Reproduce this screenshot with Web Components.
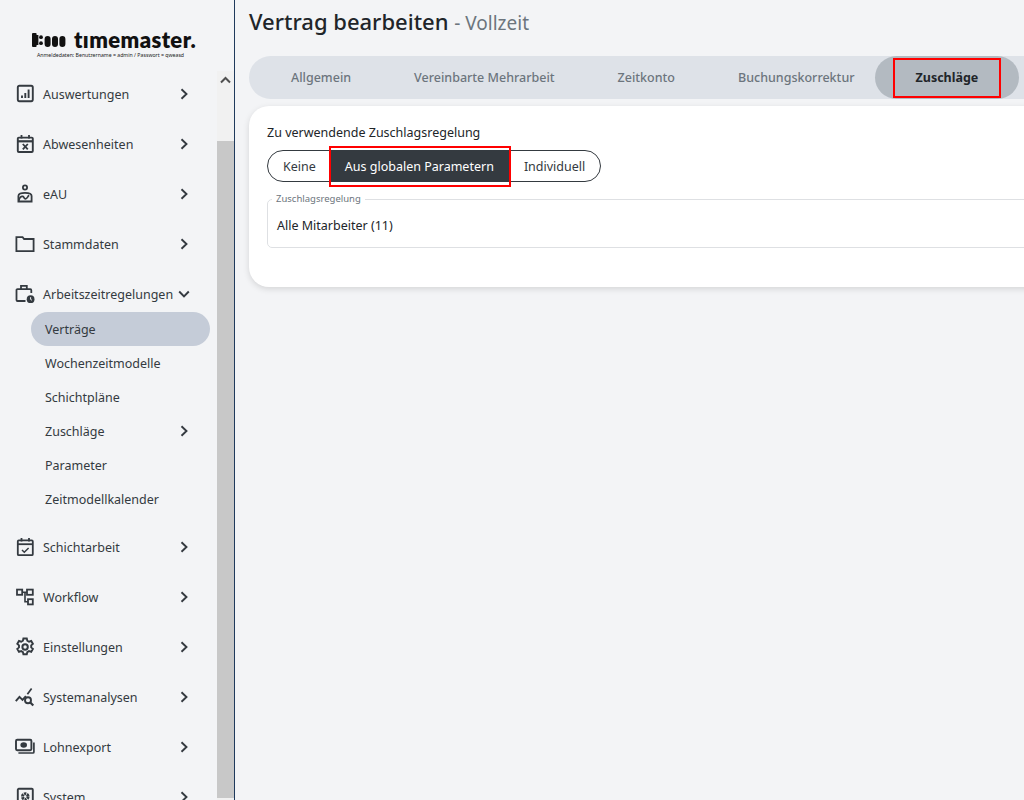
<!DOCTYPE html>
<html lang="de"><head><meta charset="utf-8"><title>Vertrag bearbeiten</title>
<style>
html,body{margin:0;height:800px;overflow:hidden;background:#f3f4f6;font-family:"Noto Sans",sans-serif;font-size:12.5px;color:#343a40}
app-shell{width:1024px;height:800px}
</style></head><body>
<app-shell>
  <side-nav slot="nav">
    <nav-item label="Auswertungen" icon="chart"></nav-item>
    <nav-item label="Abwesenheiten" icon="calx"></nav-item>
    <nav-item label="eAU" icon="eau"></nav-item>
    <nav-item label="Stammdaten" icon="folder"></nav-item>
    <nav-item label="Arbeitszeitregelungen" icon="case" open></nav-item>
    <sub-item active first>Verträge</sub-item>
    <sub-item>Wochenzeitmodelle</sub-item>
    <sub-item>Schichtpläne</sub-item>
    <sub-item more>Zuschläge</sub-item>
    <sub-item>Parameter</sub-item>
    <sub-item last>Zeitmodellkalender</sub-item>
    <nav-item label="Schichtarbeit" icon="calcheck"></nav-item>
    <nav-item label="Workflow" icon="flow"></nav-item>
    <nav-item label="Einstellungen" icon="gear"></nav-item>
    <nav-item label="Systemanalysen" icon="analyse"></nav-item>
    <nav-item label="Lohnexport" icon="money"></nav-item>
    <nav-item label="System" icon="system"></nav-item>
  </side-nav>
  <page-title sub="- Vollzeit">Vertrag bearbeiten</page-title>
  <tab-bar>
    <tab-item>Allgemein</tab-item>
    <tab-item>Vereinbarte Mehrarbeit</tab-item>
    <tab-item>Zeitkonto</tab-item>
    <tab-item>Buchungskorrektur</tab-item>
    <tab-item active>Zuschläge</tab-item>
  </tab-bar>
  <content-card>
    <form-label>Zu verwendende Zuschlagsregelung</form-label>
    <seg-group>
      <seg-btn>Keine</seg-btn>
      <seg-btn active>Aus globalen Parametern</seg-btn>
      <seg-btn>Individuell</seg-btn>
    </seg-group>
    <legend-field label="Zuschlagsregelung">Alle Mitarbeiter (11)</legend-field>
  </content-card>
</app-shell>
<script>
const ICONS={
chart:'<rect x="2.8" y="1.8" width="15" height="15.4" rx="1.6" stroke-width="1.9"/><path d="M7 14v-2.4M10.300 14V9M13.600 14V5.500" stroke-width="1.9"/>',
calx:'<rect x="2.8" y="3.600" width="15" height="14.400" rx="1" stroke-width="1.9"/><path d="M2.800 7.300h15" stroke-width="2.200"/><path d="M6.500 1v3.400M14 1v3.400" stroke-width="1.800"/><path d="M7.800 10l5 5.400M12.800 10l-5 5.400" stroke-width="1.800"/>',
eau:'<circle cx="10" cy="3.500" r="2.100" stroke-width="1.800"/><path d="M3.400 17.500v-5.400c0-2.200 2.600-3.300 6.600-3.300s6.600 1.100 6.600 3.300v5.400z" stroke-width="1.800"/><path d="M3.800 16.800c.6-3.600 2.400-4.800 4-4.400 1.400.4 1 2.600 2.700 2.500 1.800-.2 2-2.400 3.600-3.600" stroke-width="1.700"/>',
folder:'<path d="M1.400 17.200V3.200h6.200l1.500 1.800h9.500v12.200z" stroke-width="1.800"/>',
case:'<path d="M10.500 17H2.500a1 1 0 0 1-1-1V6.200a1 1 0 0 1 1-1h12.800a1 1 0 0 1 1 1V9" stroke-width="1.800"/><path d="M6 5V1.900h5.800V5" stroke-width="1.800"/><circle cx="15.600" cy="15.200" r="3.900" fill="#343a40" stroke="none"/><path d="M15.600 13.200v2.200l1.300.8" stroke="#f3f4f6" stroke-width="1"/>',
calcheck:'<rect x="2.800" y="3.400" width="15" height="14.800" rx="1" stroke-width="1.800"/><path d="M2.800 7.200h15" stroke-width="1.800"/><path d="M6.500 1v3.400M14 1v3.400" stroke-width="1.800"/><path d="M7 13l2.300 2.200 4.300-4.200" stroke-width="1.500"/>',
flow:'<rect x="2" y="2.600" width="5.200" height="5.200" stroke-width="1.800"/><rect x="12" y="2.600" width="5.800" height="5.200" stroke-width="1.800"/><rect x="13" y="12.200" width="4.800" height="5.200" stroke-width="1.800"/><path d="M7.200 5.200H12M10 5.200v9.600h3" stroke-width="1.600"/>',
gear:'<path d="M8.400 1.500h3.400l.5 2.200 1.700 1 2.200-.7 1.700 2.900-1.700 1.500v2l1.700 1.500-1.700 2.900-2.200-.7-1.700 1-.5 2.200H8.400l-.5-2.200-1.700-1-2.200.7-1.700-2.900 1.700-1.500v-2L2.300 6.900 4 4l2.200.7 1.700-1z" stroke-width="1.900"/><circle cx="10.100" cy="10" r="2.700" stroke-width="2"/>',
analyse:'<path d="M.8 14.200l3.700-4.400 3 3 3.400-3.700" stroke-width="1.900"/><path d="M12.400 7.200 16.600 1.600" stroke-width="1.700"/><circle cx="13" cy="13.200" r="3" stroke-width="1.900"/><path d="M15.300 15.500l3 3" stroke-width="2.200"/>',
money:'<rect x="1" y="2.800" width="15.400" height="10.400" rx="1.200" stroke-width="1.900"/><ellipse cx="8.700" cy="8" rx="3.300" ry="2.700" fill="#343a40" stroke="none"/><path d="M18.900 5.400v9.600a1 1 0 0 1-1 1H3.400" stroke-width="1.700"/>',
system:'<rect x="2.800" y="1.800" width="15" height="15.600" rx="1" stroke-width="1.900"/><circle cx="10.300" cy="9.600" r="2.800" stroke-width="3" stroke-dasharray="2.200 .7"/>'
};
const chev='<svg width="14" height="14" viewBox="0 0 14 14" fill="none" stroke="#343a40" stroke-width="1.900"><path d="M4.500 2.200 9.500 7l-5 4.800"/></svg>';
const chevDown='<svg width="14" height="14" viewBox="0 0 14 14" fill="none" stroke="#343a40" stroke-width="1.900"><path d="M2.200 4.500 7 9.500l4.800-5"/></svg>';
function def(name,css,html){customElements.define(name,class extends HTMLElement{
  constructor(){super();this.attachShadow({mode:'open'})}
  connectedCallback(){this.shadowRoot.innerHTML='<style>'+css+'</style>'+(typeof html==='function'?html(this):html);}
})}
def('app-shell',`:host{display:grid;grid-template-columns:235px minmax(0,1fr);grid-template-rows:56px 50px 1fr;overflow:hidden}
 .nav{grid-row:1/4;display:flex;min-height:0}
 .title{grid-column:2;min-width:0}.tabs{grid-column:2;padding-left:14px;min-width:0}.card{grid-column:2;padding-left:14px;min-width:0}`,
 `<div class="nav"><slot name="nav"></slot></div><div class="title"><slot name="t"></slot></div><div class="tabs"><slot name="b"></slot></div><div class="card"><slot name="c"></slot></div>`);
def('side-nav',`:host{display:flex;flex-direction:column;width:235px;height:800px;box-sizing:border-box;border-right:1px solid #1f3a5c;background:#f3f4f6;overflow:hidden}
 .logo{height:71px;flex:none;display:flex;flex-direction:column;align-items:flex-start;box-sizing:border-box;padding:28px 0 0 31px}
 .mark{display:flex;align-items:center;gap:8px;height:24px}
 .word{font:800 22px/24px Lato,sans-serif;color:#111;letter-spacing:.4px}
 .cred{font-size:5.2px;line-height:6px;color:#222;white-space:nowrap;margin:0 0 0 6px}
 .body{display:flex;flex:1;min-height:0}
 .menu{flex:1;min-width:0;display:flex;flex-direction:column;overflow:hidden;margin-top:-2px}
 .bar{width:17px;flex:none;background:#f1f1f1;display:flex;flex-direction:column}
 .arrow{height:17px;flex:none;display:flex;align-items:center;justify-content:center}
 .gapb{height:53px;flex:none}.thumb{flex:1;background:#c8c8c8;margin-bottom:2px}`,
 `<div class="logo"><div class="mark"><svg width="35" height="16" viewBox="0 0 35 16" fill="#111"><rect x="1" y="1" width="4.600" height="14" rx="1"/><rect x="5" y="3" width="2.400" height="10"/><circle cx="10" cy="5.200" r="1.900"/><circle cx="10" cy="11.200" r="1.900"/><rect x="13.600" y="4" width="6" height="11" rx="3"/><rect x="21" y="4" width="6" height="11" rx="3"/><rect x="28.400" y="4" width="6" height="11" rx="3"/></svg><span class="word">tımemaster.</span></div><div class="cred">Anmeldedaten: Benutzername = admin / Passwort = qweasd</div></div>
 <div class="body"><div class="menu"><slot></slot></div><div class="bar"><div class="arrow"><svg width="11" height="8" viewBox="0 0 11 8" fill="none" stroke="#505050" stroke-width="2"><path d="M1 6.500 5.500 2l4.500 4.500"/></svg></div><div class="gapb"></div><div class="thumb"></div></div></div>`);
def('nav-item',`:host{display:flex;flex:none;height:50px;align-items:center;box-sizing:border-box;padding-left:15px;font-size:12.5px;color:#343a40}
 svg.i{width:20px;height:20px;flex:none;margin-right:8px}
 .l{flex:1;white-space:nowrap}.c{flex:none;width:14px;height:14px;margin-right:26px}`,
 el=>`<svg class="i" viewBox="0 0 20 20" fill="none" stroke="#343a40">${ICONS[el.getAttribute('icon')]}</svg><span class="l">${el.getAttribute('label')}</span><span class="c">${el.hasAttribute('open')?chevDown:chev}</span>`);
def('sub-item',`:host{display:flex;flex:none;height:34px;align-items:center;box-sizing:border-box;margin-left:31px;margin-right:7px;padding-left:14px;border-radius:17px;font-size:12.5px;color:#343a40;white-space:nowrap}
 :host([active]){background:#c5ccd8}
 :host([first]){margin-top:-7px}
 :host([last]){margin-bottom:6px}
 .s{flex:1}.c{width:14px;height:14px;margin-right:19px}`,
 el=>`<span class="s"><slot></slot></span>${el.hasAttribute('more')?'<span class="c">'+chev+'</span>':''}`);
def('page-title',`:host{display:block;height:56px;box-sizing:border-box;padding:5px 0 0 14px;font-size:22px;line-height:32px;color:#212529;font-weight:500;white-space:nowrap}
 span{font-size:19px;font-weight:400;color:#6c757d}`,
 el=>`<slot></slot> <span>${el.getAttribute('sub')}</span>`);
def('tab-bar',`:host{display:flex;width:800px;height:43px;align-items:stretch;background:#dee2e8;border-radius:22px 0 0 22px;padding-left:10.5px;box-sizing:border-box}`,`<slot></slot>`);
def('tab-item',`:host{display:flex;align-items:center;padding:0 31.5px;color:#6c757d;font-size:12.5px;font-weight:500;white-space:nowrap}
 :host([active]){background:#b3bac1;border-radius:22px;color:#212529;font-weight:700;padding:0 18px;margin-left:-11.5px}
 .in{display:block}
 :host([active]) .in{box-sizing:border-box;height:40px;line-height:36px;padding:0 21px;border:2px solid #f00}`,
 `<span class="in"><slot></slot></span>`);
def('content-card',`:host{display:block;width:800px;height:181px;box-sizing:border-box;background:#fff;border-radius:20px;padding:18px 18px;box-shadow:0 2px 6px rgba(0,0,0,.13)}`,`<slot></slot>`);
def('form-label',`:host{display:block;font-size:12.5px;line-height:18px;color:#212529;margin-bottom:8px}`,`<slot></slot>`);
def('seg-group',`:host{display:inline-flex;height:32px;box-sizing:border-box;border:1px solid #343a40;border-radius:16px;vertical-align:top}`,`<slot></slot>`);
def('seg-btn',`:host{display:flex;position:relative;align-items:center;padding:0 15px;font-size:12.5px;color:#343a40;white-space:nowrap}
 :host([active]){background:#343a40;color:#fff;padding:0 15px 0 14px;margin:-1px 0}
 :host([active])::after{content:"";position:absolute;inset:-4px -2px -5px -2px;border:2px solid #f00;pointer-events:none}`,`<slot></slot>`);
def('legend-field',`:host{display:block;margin-top:11px}
 fieldset{margin:0;padding:12px 9px 0;height:55px;box-sizing:border-box;border:1px solid #dee0e3;border-radius:5px}
 legend{font-size:9.5px;line-height:12px;color:#6c757d;padding:0 4px;margin-left:-5px}
 div{font-size:12.5px;line-height:18px;color:#212529}`,
 el=>`<fieldset><legend>${el.getAttribute('label')}</legend><div><slot></slot></div></fieldset>`);
document.querySelector('page-title').slot='t';
document.querySelector('tab-bar').slot='b';
document.querySelector('content-card').slot='c';
</script>
</body></html>
